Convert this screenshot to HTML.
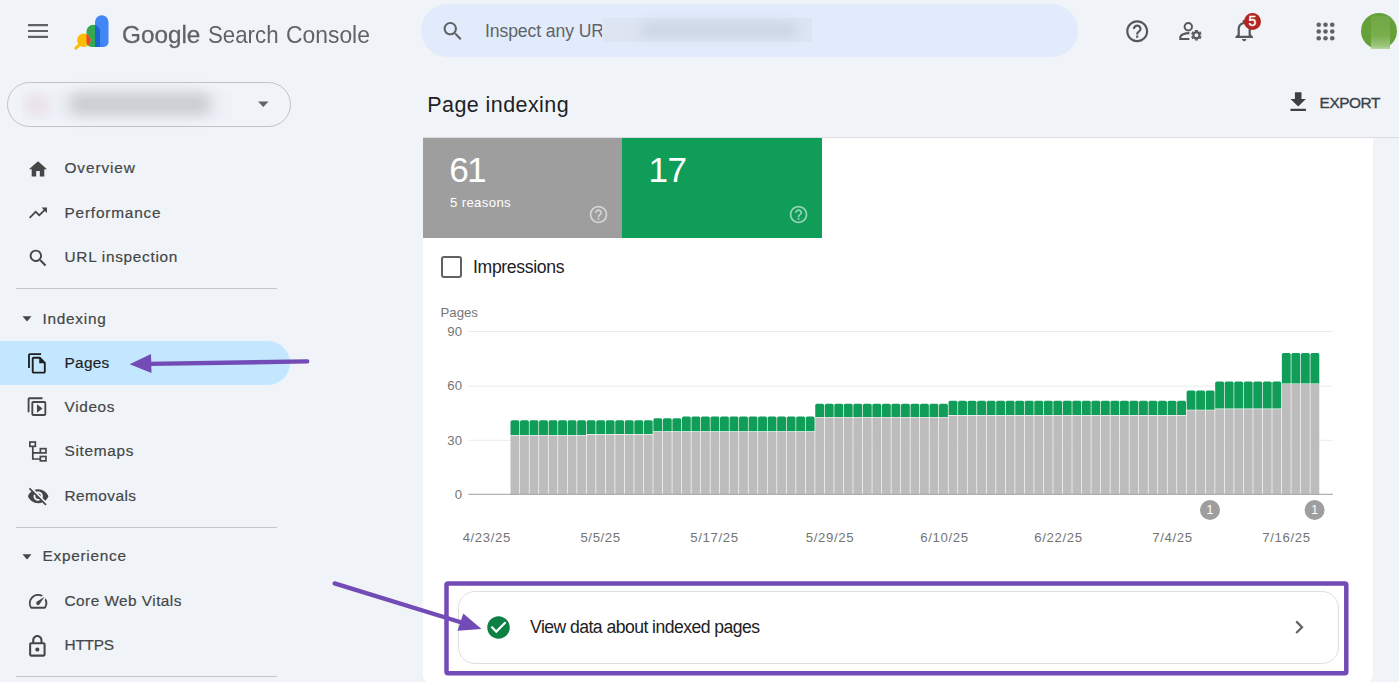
<!DOCTYPE html>
<html lang="en">
<head>
<meta charset="utf-8">
<title>Page indexing</title>
<style>
*{box-sizing:border-box;margin:0;padding:0}
html,body{width:1399px;height:682px;overflow:hidden}
body{background:#f0f4f9;font-family:"Liberation Sans",Arial,sans-serif;position:relative;color:#444746}
.abs{position:absolute}
.t{position:absolute;white-space:nowrap;line-height:1}
svg{position:absolute;overflow:visible}
.nav{font-size:15.4px;color:#444746;left:64.5px;-webkit-text-stroke:0.2px #444746;letter-spacing:.72px}
.sec{font-size:15.4px;color:#444746;left:42.5px;-webkit-text-stroke:0.2px #444746;letter-spacing:.72px}
.hr{position:absolute;left:15.5px;width:261px;height:1px;background:#c4c7c5}
.ic{fill:#444746}
</style>
</head>
<body>

<!-- ===== top-left: menu + logo + title ===== -->
<svg style="left:25.5px;top:18.800px;fill:#5f6368" width="24" height="24" viewBox="0 0 24 24"><path d="M2 19h20v-2.2H2V19zm0-5.9h20v-2.2H2v2.2zM2 5v2.2h20V5H2z"/></svg>

<svg style="left:72px;top:13px" width="40" height="40" viewBox="0 0 40 40">
  <defs>
    <clipPath id="cpB"><path d="M23 9.050a6.750 6.750 0 0 1 13.500 0V28.900a5 5 0 0 1 -5 5H23z"/></clipPath>
    <clipPath id="cpG"><path d="M14.500 18.450a6.750 6.750 0 0 1 13.500 0V33.900H19.500a5 5 0 0 1 -5 -5z"/></clipPath>
  </defs>
  <path d="M14.500 18.450a6.750 6.750 0 0 1 13.500 0V33.900H19.500a5 5 0 0 1 -5 -5z" fill="#34a853"/>
  <path d="M23 9.050a6.750 6.750 0 0 1 13.500 0V28.900a5 5 0 0 1 -5 5H23z" fill="#4285f4"/>
  <path d="M14.500 18.450a6.750 6.750 0 0 1 13.500 0V33.900H19.500a5 5 0 0 1 -5 -5z" fill="#1a67d2" clip-path="url(#cpB)"/>
  <path d="M8.300 31.200 L3.900 35.200" stroke="#fbbc04" stroke-width="3" stroke-linecap="round" fill="none"/>
  <circle cx="11.800" cy="27.300" r="6.700" fill="#fbbc04"/>
  <circle cx="11.800" cy="27.300" r="6.700" fill="#ea4335" clip-path="url(#cpG)"/>
</svg>

<div class="t" id="gsc" style="left:121.700px;top:22.700px;font-size:24.600px;color:#5f6368;width:260px"><span style="position:absolute;left:0;top:0;transform-origin:0 0;transform:scaleX(.988);-webkit-text-stroke:.3px #5f6368">Google</span> <span style="position:absolute;left:86.200px;top:0;transform-origin:0 0;transform:scaleX(.905)">Search</span> <span style="position:absolute;left:164px;top:0;transform-origin:0 0;transform:scaleX(.93)">Console</span></div>

<!-- property selector -->
<div class="abs" style="left:6.5px;top:82px;width:284px;height:45px;border:1px solid #c0c4c9;border-radius:23px"></div>
<div class="abs" style="left:22px;top:90px;width:210px;height:30px;border-radius:4px;background:#eef1f7"></div>
<div class="abs" style="left:24px;top:94px;width:26px;height:22px;border-radius:11px;background:#eadfea;filter:blur(5px);opacity:.8"></div>
<div class="abs" style="left:68px;top:93px;width:144px;height:22px;border-radius:11px;background:#c8cbd0;filter:blur(7px)"></div>
<svg style="left:250.5px;top:92px" width="24" height="24" viewBox="0 0 24 24"><path d="M7 9.5l5.3 5.6 5.3-5.6z" fill="#5f6368"/></svg>

<!-- ===== sidebar nav ===== -->
<svg class="ic" style="left:26px;top:156.5px" width="24" height="24" viewBox="0 0 24 24"><path d="M10 20v-6h4v6h5v-8h3L12 3 2 12h3v8z" transform="translate(1.2 1.5) scale(.9)"/></svg>
<div class="t nav" style="top:160px;letter-spacing:0.9px">Overview</div>

<svg class="ic" style="left:26px;top:200.5px" width="24" height="24" viewBox="0 0 24 24"><path d="M16 6l2.29 2.29-4.88 4.88-4-4L2 16.59 3.41 18l6-6 4 4 6.3-6.29L22 12V6z" transform="translate(1.2 1.2) scale(.9)"/></svg>
<div class="t nav" style="top:204.7px;letter-spacing:0.8px">Performance</div>

<svg class="ic" style="left:26.200px;top:245.500px" width="24" height="24" viewBox="0 0 24 24"><path d="M15.5 14h-.79l-.28-.27C15.41 12.59 16 11.11 16 9.500 16 5.910 13.090 3 9.500 3S3 5.910 3 9.500 5.910 16 9.500 16c1.610 0 3.090-.59 4.230-1.570l.27.28v.79l5 4.990L20.490 19l-4.990-5zm-6 0C7.010 14 5 11.990 5 9.500S7.010 5 9.500 5 14 7.010 14 9.500 11.990 14 9.500 14z" transform="translate(.8 .8) scale(.95)"/></svg>
<div class="t nav" style="top:249.2px;letter-spacing:0.7px">URL inspection</div>

<div class="hr" style="top:288px"></div>

<svg class="ic" style="left:14.5px;top:307px" width="24" height="24" viewBox="0 0 24 24"><path d="M7.500 9.200l4.500 5.300 4.500-5.300z"/></svg>
<div class="t sec" style="top:310.5px;letter-spacing:0.72px">Indexing</div>

<!-- selected item -->
<div class="abs" style="left:0;top:340.5px;width:290px;height:44.5px;background:#c2e7ff;border-radius:0 22.25px 22.25px 0"></div>
<svg style="left:25px;top:350.500px;fill:#1f1f1f" width="24" height="24" viewBox="0 0 24 24"><path d="M16 1H4c-1.100 0-2 .9-2 2v14h2V3h12V1zm-1 4H8c-1.100 0-1.990.9-1.990 2L6 21c0 1.100.89 2 1.990 2H19c1.100 0 2-.9 2-2V11l-6-6zM8 21V7h6v5h5v9H8z" transform="translate(1.2 1.200) scale(.93)"/></svg>
<div class="t nav" style="top:354.7px;color:#1f1f1f;-webkit-text-stroke:.2px #1f1f1f;letter-spacing:0.28px">Pages</div>

<svg class="ic" style="left:25.300px;top:395.200px" width="24" height="24" viewBox="0 0 24 24"><path d="M4 6H2v14c0 1.100.9 2 2 2h14v-2H4V6zm16-4H8c-1.100 0-2 .9-2 2v12c0 1.100.9 2 2 2h12c1.100 0 2-.9 2-2V4c0-1.100-.9-2-2-2zm0 14H8V4h12v12zM12 5.500v9l6-4.500z" transform="translate(.8 22.8) scale(.93 -.93)"/></svg>
<div class="t nav" style="top:399px;letter-spacing:0.64px">Videos</div>

<!-- sitemaps icon (custom) -->
<svg style="left:28px;top:440px" width="20" height="23" viewBox="0 0 20 23" fill="none" stroke="#444746" stroke-width="1.700">
  <rect x="1.850" y="2.050" width="5.500" height="4.300"/>
  <path d="M4.800 6.350V19h7.500M4.800 12.900h7.500"/>
  <rect x="12.350" y="8.650" width="5.600" height="4.250"/>
  <rect x="12.350" y="16.500" width="5.600" height="4.350"/>
</svg>
<div class="t nav" style="top:443.300px;letter-spacing:0.69px">Sitemaps</div>

<svg class="ic" style="left:26.600px;top:485px" width="22.400" height="22.400" viewBox="0 0 24 24"><path d="M12 7c2.760 0 5 2.240 5 5 0 .65-.13 1.260-.36 1.830l2.920 2.920c1.510-1.260 2.700-2.890 3.430-4.750-1.730-4.390-6-7.500-11-7.500-1.400 0-2.740.25-3.980.7l2.160 2.160C10.740 7.130 11.350 7 12 7zM2 4.270l2.280 2.280.46.46C3.080 8.300 1.780 10.020 1 12c1.730 4.390 6 7.500 11 7.500 1.550 0 3.030-.3 4.380-.84l.42.42L19.730 22 21 20.730 3.270 3 2 4.270zM7.530 9.800l1.550 1.550c-.05.21-.08.43-.08.65 0 1.660 1.340 3 3 3 .22 0 .44-.03.65-.08l1.550 1.550c-.67.33-1.410.53-2.200.53-2.760 0-5-2.240-5-5 0-.79.2-1.530.53-2.200zm4.310-.78l3.150 3.150.02-.16c0-1.660-1.340-3-3-3l-.17.010z"/></svg>
<div class="t nav" style="top:487.500px;letter-spacing:0.44px">Removals</div>

<div class="hr" style="top:526.5px"></div>

<svg class="ic" style="left:14.5px;top:545px" width="24" height="24" viewBox="0 0 24 24"><path d="M7.500 9.200l4.500 5.300 4.500-5.300z"/></svg>
<div class="t sec" style="top:548px;letter-spacing:0.72px">Experience</div>

<svg class="ic" style="left:25.5px;top:589.500px" width="24" height="24" viewBox="0 0 24 24"><path d="M20.380 8.570l-1.230 1.850a8 8 0 0 1-.22 7.580H5.070A8 8 0 0 1 15.580 6.850l1.850-1.230A10 10 0 0 0 3.350 19a2 2 0 0 0 1.720 1h13.850a2 2 0 0 0 1.740-1 10 10 0 0 0-.27-10.440zm-9.790 6.840a2 2 0 0 0 2.830 0l5.660-8.490-8.490 5.660a2 2 0 0 0 0 2.830z" transform="translate(1 .3) scale(.92)"/></svg>
<div class="t nav" style="top:592.700px;letter-spacing:0.45px">Core Web Vitals</div>

<svg class="ic" style="left:24.900px;top:633.500px" width="24" height="24" viewBox="0 0 24 24"><path d="M18 8h-1V6c0-2.760-2.240-5-5-5S7 3.240 7 6v2H6c-1.100 0-2 .9-2 2v10c0 1.100.9 2 2 2h12c1.100 0 2-.9 2-2V10c0-1.100-.9-2-2-2zM9 6c0-1.660 1.340-3 3-3s3 1.340 3 3v2H9V6zm9 14H6V10h12v10zm-6-3c1.100 0 2-.9 2-2s-.9-2-2-2-2 .9-2 2 .9 2 2 2z" transform="scale(1.030)"/></svg>
<div class="t nav" style="top:637px;letter-spacing:-0.22px">HTTPS</div>

<div class="hr" style="top:676px"></div>


<!-- ===== top search bar ===== -->
<div class="abs" style="left:421px;top:4px;width:656.500px;height:53px;border-radius:26.500px;background:#e2ebfb"></div>
<svg style="left:440.500px;top:19.300px;fill:#5f6368" width="24" height="24" viewBox="0 0 24 24"><path d="M15.500 14h-.79l-.28-.27C15.410 12.590 16 11.110 16 9.500 16 5.910 13.090 3 9.500 3S3 5.910 3 9.500 5.910 16 9.500 16c1.610 0 3.090-.59 4.230-1.570l.27.28v.79l5 4.990L20.490 19l-4.990-5zm-6 0C7.010 14 5 11.990 5 9.500S7.010 5 9.500 5 14 7.010 14 9.500 11.990 14 9.500 14z" transform="translate(-.4 0) scale(1.020)"/></svg>
<div class="t" id="insp" style="left:485px;top:22.700px;font-size:17.600px;color:#5f6368;letter-spacing:-.1px">Inspect any UR</div>
<div class="abs" style="left:602px;top:18px;width:210px;height:24px;background:#dde5f2"></div>
<div class="abs" style="left:640px;top:23px;width:158px;height:14px;border-radius:7px;background:#cbd4e3;filter:blur(6px)"></div>

<!-- header icons -->
<svg style="left:1124px;top:18px;fill:#54575b" width="26.400" height="26.400" viewBox="0 0 24 24"><path d="M11 18h2v-2h-2v2zm1-16C6.480 2 2 6.480 2 12s4.480 10 10 10 10-4.480 10-10S17.520 2 12 2zm0 18c-4.410 0-8-3.590-8-8s3.590-8 8-8 8 3.590 8 8-3.590 8-8 8zm0-14c-2.210 0-4 1.790-4 4h2c0-1.100.9-2 2-2s2 .9 2 2c0 2-3 1.750-3 5h2c0-2.250 3-2.500 3-5 0-2.210-1.790-4-4-4z"/></svg>

<!-- manage accounts (custom) -->
<svg style="left:1177px;top:19px" width="27" height="24" viewBox="0 0 27 24" fill="none" stroke="#54575b" stroke-width="2">
  <circle cx="11.300" cy="7.700" r="3.700"/>
  <path d="M12.400 14.100c-4.500 0 -9.100 1.500 -9.100 4.400V20h9" stroke-width="2.100"/>
  <circle cx="19.4" cy="16.3" r="3.100" stroke-width="2.200"/>
  <path d="M19.40 20.30L19.40 21.60M15.94 18.30L14.81 18.95M15.94 14.30L14.81 13.65M19.40 12.30L19.40 11.00M22.86 14.30L23.99 13.65M22.86 18.30L23.99 18.95" stroke-width="3"/>
</svg>

<svg style="left:1230.500px;top:17.400px;fill:#54575b" width="26.400" height="26.400" viewBox="0 0 24 24"><path d="M12 22c1.100 0 2-.9 2-2h-4c0 1.100.9 2 2 2zm6-6v-5c0-3.070-1.630-5.640-4.500-6.320V4c0-.83-.67-1.500-1.500-1.500s-1.500.67-1.500 1.500v.68C7.640 5.360 6 7.920 6 11v5l-2 2v1h16v-1l-2-2zm-2 1H8v-6c0-2.480 1.510-4.500 4-4.500s4 2.020 4 4.500v6z"/></svg>
<div class="abs" style="left:1243.500px;top:12.500px;width:17.600px;height:17.600px;border-radius:50%;background:#b3261e"></div>
<div class="t" style="left:1243.500px;top:14.100px;width:17.600px;text-align:center;font-size:14px;font-weight:400;-webkit-text-stroke:.4px #fff;color:#fff">5</div>

<svg style="left:1316px;top:21.500px;fill:#5f6368" width="19" height="19" viewBox="0 0 19 19">
  <circle cx="2.750" cy="2.750" r="2.300"/><circle cx="9.500" cy="2.750" r="2.300"/><circle cx="16.250" cy="2.750" r="2.300"/>
  <circle cx="2.750" cy="9.500" r="2.300"/><circle cx="9.500" cy="9.500" r="2.300"/><circle cx="16.250" cy="9.500" r="2.300"/>
  <circle cx="2.750" cy="16.250" r="2.300"/><circle cx="9.500" cy="16.250" r="2.300"/><circle cx="16.250" cy="16.250" r="2.300"/>
</svg>

<!-- avatar -->
<div class="abs" style="left:1360.700px;top:13px;width:36px;height:36px;border-radius:50%;background:#66a039"></div>
<div class="abs" style="left:1370.700px;top:16px;width:19.800px;height:33px;background:linear-gradient(#70a743,#7aae4e 60%,#9fc681 92%,#b9d6a4)"></div>

<!-- page title row -->
<div class="t" id="ttl" style="left:427.300px;top:95.200px;font-size:21.500px;color:#1f1f1f;letter-spacing:.42px">Page indexing</div>
<svg style="left:1284.500px;top:89.200px;fill:#3c4043" width="26.400" height="26.400" viewBox="0 0 24 24"><path d="M19 9h-4V3H9v6H5l7 7 7-7zM5 18v2h14v-2H5z"/></svg>
<div class="t" id="exp" style="left:1319.600px;top:95.300px;font-size:15.400px;color:#3c4043;letter-spacing:-.45px;-webkit-text-stroke:.35px #3c4043">EXPORT</div>

<div class="abs" style="left:423px;top:137px;width:976px;height:1px;background:#dadce0"></div>

<!-- ===== white card ===== -->
<div class="abs" style="left:423px;top:138px;width:950px;height:546px;background:#fff;border-radius:0 0 9px 9px"></div>

<!-- tiles -->
<div class="abs" style="left:423px;top:138px;width:199px;height:100px;background:#9e9e9e"></div>
<div class="abs" style="left:622px;top:138px;width:200px;height:100px;background:#0f9d58"></div>
<div class="t" style="left:449.300px;top:151.500px;font-size:35.200px;color:#fff;letter-spacing:-1.800px">61</div>
<div class="t" style="left:450px;top:196px;font-size:13.200px;color:#fff;letter-spacing:.35px">5 reasons</div>
<div class="t" style="left:648.500px;top:151.500px;font-size:35.200px;color:#fff;letter-spacing:-.6px">17</div>
<svg style="left:588.200px;top:204.200px;fill:#fff;opacity:.55" width="21.100" height="21.100" viewBox="0 0 24 24"><path d="M11 18h2v-2h-2v2zm1-16C6.480 2 2 6.480 2 12s4.480 10 10 10 10-4.480 10-10S17.520 2 12 2zm0 18c-4.410 0-8-3.590-8-8s3.590-8 8-8 8 3.590 8 8-3.590 8-8 8zm0-14c-2.210 0-4 1.790-4 4h2c0-1.100.9-2 2-2s2 .9 2 2c0 2-3 1.750-3 5h2c0-2.250 3-2.500 3-5 0-2.210-1.790-4-4-4z"/></svg>
<svg style="left:787.700px;top:204.200px;fill:#fff;opacity:.55" width="21.100" height="21.100" viewBox="0 0 24 24"><path d="M11 18h2v-2h-2v2zm1-16C6.480 2 2 6.480 2 12s4.480 10 10 10 10-4.480 10-10S17.520 2 12 2zm0 18c-4.410 0-8-3.590-8-8s3.590-8 8-8 8 3.590 8 8-3.590 8-8 8zm0-14c-2.210 0-4 1.790-4 4h2c0-1.100.9-2 2-2s2 .9 2 2c0 2-3 1.750-3 5h2c0-2.250 3-2.500 3-5 0-2.210-1.790-4-4-4z"/></svg>

<!-- checkbox -->
<div class="abs" style="left:440.500px;top:255.800px;width:21.800px;height:21.800px;border:2.200px solid #616161;border-radius:3px"></div>
<div class="t" id="impr" style="left:473px;top:259px;font-size:17.600px;color:#202124;letter-spacing:-.33px">Impressions</div>

<!-- ===== chart ===== -->
<svg style="left:0;top:0" width="1399" height="682" viewBox="0 0 1399 682" font-family="Liberation Sans, Arial, sans-serif">
  <g stroke="#ebebeb" stroke-width="1">
    <line x1="468.500" x2="1333" y1="331.500" y2="331.500"/>
    <line x1="468.500" x2="1333" y1="386.200" y2="386.200"/>
    <line x1="468.500" x2="1333" y1="440.300" y2="440.300"/>
  </g>
  <g shape-rendering="auto">
<rect x="510.50" y="435.58" width="8.87" height="58.67" fill="#bdbdbd"/>
<path d="M510.50 434.98V421.89q0 -1.6 1.6 -1.6h5.67q1.6 0 1.6 1.6V434.98z" fill="#0f9d58"/>
<rect x="520.02" y="435.58" width="8.87" height="58.67" fill="#bdbdbd"/>
<path d="M520.02 434.98V421.89q0 -1.6 1.6 -1.6h5.67q1.6 0 1.6 1.6V434.98z" fill="#0f9d58"/>
<rect x="529.55" y="435.58" width="8.87" height="58.67" fill="#bdbdbd"/>
<path d="M529.55 434.98V421.89q0 -1.6 1.6 -1.6h5.67q1.6 0 1.6 1.6V434.98z" fill="#0f9d58"/>
<rect x="539.07" y="435.58" width="8.87" height="58.67" fill="#bdbdbd"/>
<path d="M539.07 434.98V421.89q0 -1.6 1.6 -1.6h5.67q1.6 0 1.6 1.6V434.98z" fill="#0f9d58"/>
<rect x="548.59" y="435.58" width="8.87" height="58.67" fill="#bdbdbd"/>
<path d="M548.59 434.98V421.89q0 -1.6 1.6 -1.6h5.67q1.6 0 1.6 1.6V434.98z" fill="#0f9d58"/>
<rect x="558.12" y="435.58" width="8.87" height="58.67" fill="#bdbdbd"/>
<path d="M558.12 434.98V421.89q0 -1.6 1.6 -1.6h5.67q1.6 0 1.6 1.6V434.98z" fill="#0f9d58"/>
<rect x="567.64" y="435.58" width="8.87" height="58.67" fill="#bdbdbd"/>
<path d="M567.64 434.98V421.89q0 -1.6 1.6 -1.6h5.67q1.6 0 1.6 1.6V434.98z" fill="#0f9d58"/>
<rect x="577.16" y="435.58" width="8.87" height="58.67" fill="#bdbdbd"/>
<path d="M577.16 434.98V421.89q0 -1.6 1.6 -1.6h5.67q1.6 0 1.6 1.6V434.98z" fill="#0f9d58"/>
<rect x="586.68" y="434.67" width="8.87" height="59.58" fill="#bdbdbd"/>
<path d="M586.68 434.07V421.89q0 -1.6 1.6 -1.6h5.67q1.6 0 1.6 1.6V434.07z" fill="#0f9d58"/>
<rect x="596.21" y="434.67" width="8.87" height="59.58" fill="#bdbdbd"/>
<path d="M596.21 434.07V421.89q0 -1.6 1.6 -1.6h5.67q1.6 0 1.6 1.6V434.07z" fill="#0f9d58"/>
<rect x="605.73" y="434.67" width="8.87" height="59.58" fill="#bdbdbd"/>
<path d="M605.73 434.07V421.89q0 -1.6 1.6 -1.6h5.67q1.6 0 1.6 1.6V434.07z" fill="#0f9d58"/>
<rect x="615.25" y="434.67" width="8.87" height="59.58" fill="#bdbdbd"/>
<path d="M615.25 434.07V421.89q0 -1.6 1.6 -1.6h5.67q1.6 0 1.6 1.6V434.07z" fill="#0f9d58"/>
<rect x="624.78" y="434.67" width="8.87" height="59.58" fill="#bdbdbd"/>
<path d="M624.78 434.07V421.89q0 -1.6 1.6 -1.6h5.67q1.6 0 1.6 1.6V434.07z" fill="#0f9d58"/>
<rect x="634.30" y="434.67" width="8.87" height="59.58" fill="#bdbdbd"/>
<path d="M634.30 434.07V421.89q0 -1.6 1.6 -1.6h5.67q1.6 0 1.6 1.6V434.07z" fill="#0f9d58"/>
<rect x="643.82" y="434.67" width="8.87" height="59.58" fill="#bdbdbd"/>
<path d="M643.82 434.07V421.89q0 -1.6 1.6 -1.6h5.67q1.6 0 1.6 1.6V434.07z" fill="#0f9d58"/>
<rect x="653.35" y="431.96" width="8.87" height="62.29" fill="#bdbdbd"/>
<path d="M653.35 431.36V419.90q0 -1.6 1.6 -1.6h5.67q1.6 0 1.6 1.6V431.36z" fill="#0f9d58"/>
<rect x="662.87" y="431.96" width="8.87" height="62.29" fill="#bdbdbd"/>
<path d="M662.87 431.36V419.90q0 -1.6 1.6 -1.6h5.67q1.6 0 1.6 1.6V431.36z" fill="#0f9d58"/>
<rect x="672.39" y="431.96" width="8.87" height="62.29" fill="#bdbdbd"/>
<path d="M672.39 431.36V419.90q0 -1.6 1.6 -1.6h5.67q1.6 0 1.6 1.6V431.36z" fill="#0f9d58"/>
<rect x="681.91" y="431.96" width="8.87" height="62.29" fill="#bdbdbd"/>
<path d="M681.91 431.36V418.09q0 -1.6 1.6 -1.6h5.67q1.6 0 1.6 1.6V431.36z" fill="#0f9d58"/>
<rect x="691.44" y="431.96" width="8.87" height="62.29" fill="#bdbdbd"/>
<path d="M691.44 431.36V418.09q0 -1.6 1.6 -1.6h5.67q1.6 0 1.6 1.6V431.36z" fill="#0f9d58"/>
<rect x="700.96" y="431.96" width="8.87" height="62.29" fill="#bdbdbd"/>
<path d="M700.96 431.36V418.09q0 -1.6 1.6 -1.6h5.67q1.6 0 1.6 1.6V431.36z" fill="#0f9d58"/>
<rect x="710.48" y="431.96" width="8.87" height="62.29" fill="#bdbdbd"/>
<path d="M710.48 431.36V418.09q0 -1.6 1.6 -1.6h5.67q1.6 0 1.6 1.6V431.36z" fill="#0f9d58"/>
<rect x="720.01" y="431.96" width="8.87" height="62.29" fill="#bdbdbd"/>
<path d="M720.01 431.36V418.09q0 -1.6 1.6 -1.6h5.67q1.6 0 1.6 1.6V431.36z" fill="#0f9d58"/>
<rect x="729.53" y="431.96" width="8.87" height="62.29" fill="#bdbdbd"/>
<path d="M729.53 431.36V418.09q0 -1.6 1.6 -1.6h5.67q1.6 0 1.6 1.6V431.36z" fill="#0f9d58"/>
<rect x="739.05" y="431.96" width="8.87" height="62.29" fill="#bdbdbd"/>
<path d="M739.05 431.36V418.09q0 -1.6 1.6 -1.6h5.67q1.6 0 1.6 1.6V431.36z" fill="#0f9d58"/>
<rect x="748.58" y="431.96" width="8.87" height="62.29" fill="#bdbdbd"/>
<path d="M748.58 431.36V418.09q0 -1.6 1.6 -1.6h5.67q1.6 0 1.6 1.6V431.36z" fill="#0f9d58"/>
<rect x="758.10" y="431.96" width="8.87" height="62.29" fill="#bdbdbd"/>
<path d="M758.10 431.36V418.09q0 -1.6 1.6 -1.6h5.67q1.6 0 1.6 1.6V431.36z" fill="#0f9d58"/>
<rect x="767.62" y="431.96" width="8.87" height="62.29" fill="#bdbdbd"/>
<path d="M767.62 431.36V418.09q0 -1.6 1.6 -1.6h5.67q1.6 0 1.6 1.6V431.36z" fill="#0f9d58"/>
<rect x="777.14" y="431.96" width="8.87" height="62.29" fill="#bdbdbd"/>
<path d="M777.14 431.36V418.09q0 -1.6 1.6 -1.6h5.67q1.6 0 1.6 1.6V431.36z" fill="#0f9d58"/>
<rect x="786.67" y="431.96" width="8.87" height="62.29" fill="#bdbdbd"/>
<path d="M786.67 431.36V418.09q0 -1.6 1.6 -1.6h5.67q1.6 0 1.6 1.6V431.36z" fill="#0f9d58"/>
<rect x="796.19" y="431.96" width="8.87" height="62.29" fill="#bdbdbd"/>
<path d="M796.19 431.36V418.09q0 -1.6 1.6 -1.6h5.67q1.6 0 1.6 1.6V431.36z" fill="#0f9d58"/>
<rect x="805.71" y="431.96" width="8.87" height="62.29" fill="#bdbdbd"/>
<path d="M805.71 431.36V418.09q0 -1.6 1.6 -1.6h5.67q1.6 0 1.6 1.6V431.36z" fill="#0f9d58"/>
<rect x="815.24" y="417.49" width="8.87" height="76.76" fill="#bdbdbd"/>
<path d="M815.24 416.89V405.44q0 -1.6 1.6 -1.6h5.67q1.6 0 1.6 1.6V416.89z" fill="#0f9d58"/>
<rect x="824.76" y="417.49" width="8.87" height="76.76" fill="#bdbdbd"/>
<path d="M824.76 416.89V405.44q0 -1.6 1.6 -1.6h5.67q1.6 0 1.6 1.6V416.89z" fill="#0f9d58"/>
<rect x="834.28" y="417.49" width="8.87" height="76.76" fill="#bdbdbd"/>
<path d="M834.28 416.89V405.44q0 -1.6 1.6 -1.6h5.67q1.6 0 1.6 1.6V416.89z" fill="#0f9d58"/>
<rect x="843.81" y="417.49" width="8.87" height="76.76" fill="#bdbdbd"/>
<path d="M843.81 416.89V405.44q0 -1.6 1.6 -1.6h5.67q1.6 0 1.6 1.6V416.89z" fill="#0f9d58"/>
<rect x="853.33" y="417.49" width="8.87" height="76.76" fill="#bdbdbd"/>
<path d="M853.33 416.89V405.44q0 -1.6 1.6 -1.6h5.67q1.6 0 1.6 1.6V416.89z" fill="#0f9d58"/>
<rect x="862.85" y="417.49" width="8.87" height="76.76" fill="#bdbdbd"/>
<path d="M862.85 416.89V405.44q0 -1.6 1.6 -1.6h5.67q1.6 0 1.6 1.6V416.89z" fill="#0f9d58"/>
<rect x="872.37" y="417.49" width="8.87" height="76.76" fill="#bdbdbd"/>
<path d="M872.37 416.89V405.44q0 -1.6 1.6 -1.6h5.67q1.6 0 1.6 1.6V416.89z" fill="#0f9d58"/>
<rect x="881.90" y="417.49" width="8.87" height="76.76" fill="#bdbdbd"/>
<path d="M881.90 416.89V405.44q0 -1.6 1.6 -1.6h5.67q1.6 0 1.6 1.6V416.89z" fill="#0f9d58"/>
<rect x="891.42" y="417.49" width="8.87" height="76.76" fill="#bdbdbd"/>
<path d="M891.42 416.89V405.44q0 -1.6 1.6 -1.6h5.67q1.6 0 1.6 1.6V416.89z" fill="#0f9d58"/>
<rect x="900.94" y="417.49" width="8.87" height="76.76" fill="#bdbdbd"/>
<path d="M900.94 416.89V405.44q0 -1.6 1.6 -1.6h5.67q1.6 0 1.6 1.6V416.89z" fill="#0f9d58"/>
<rect x="910.47" y="417.49" width="8.87" height="76.76" fill="#bdbdbd"/>
<path d="M910.47 416.89V405.44q0 -1.6 1.6 -1.6h5.67q1.6 0 1.6 1.6V416.89z" fill="#0f9d58"/>
<rect x="919.99" y="417.49" width="8.87" height="76.76" fill="#bdbdbd"/>
<path d="M919.99 416.89V405.44q0 -1.6 1.6 -1.6h5.67q1.6 0 1.6 1.6V416.89z" fill="#0f9d58"/>
<rect x="929.51" y="417.49" width="8.87" height="76.76" fill="#bdbdbd"/>
<path d="M929.51 416.89V405.44q0 -1.6 1.6 -1.6h5.67q1.6 0 1.6 1.6V416.89z" fill="#0f9d58"/>
<rect x="939.03" y="417.49" width="8.87" height="76.76" fill="#bdbdbd"/>
<path d="M939.03 416.89V405.44q0 -1.6 1.6 -1.6h5.67q1.6 0 1.6 1.6V416.89z" fill="#0f9d58"/>
<rect x="948.56" y="415.68" width="8.87" height="78.57" fill="#bdbdbd"/>
<path d="M948.56 415.08V402.27q0 -1.6 1.6 -1.6h5.67q1.6 0 1.6 1.6V415.08z" fill="#0f9d58"/>
<rect x="958.08" y="415.68" width="8.87" height="78.57" fill="#bdbdbd"/>
<path d="M958.08 415.08V402.27q0 -1.6 1.6 -1.6h5.67q1.6 0 1.6 1.6V415.08z" fill="#0f9d58"/>
<rect x="967.60" y="415.68" width="8.87" height="78.57" fill="#bdbdbd"/>
<path d="M967.60 415.08V402.27q0 -1.6 1.6 -1.6h5.67q1.6 0 1.6 1.6V415.08z" fill="#0f9d58"/>
<rect x="977.13" y="415.68" width="8.87" height="78.57" fill="#bdbdbd"/>
<path d="M977.13 415.08V402.27q0 -1.6 1.6 -1.6h5.67q1.6 0 1.6 1.6V415.08z" fill="#0f9d58"/>
<rect x="986.65" y="415.68" width="8.87" height="78.57" fill="#bdbdbd"/>
<path d="M986.65 415.08V402.27q0 -1.6 1.6 -1.6h5.67q1.6 0 1.6 1.6V415.08z" fill="#0f9d58"/>
<rect x="996.17" y="415.68" width="8.87" height="78.57" fill="#bdbdbd"/>
<path d="M996.17 415.08V402.27q0 -1.6 1.6 -1.6h5.67q1.6 0 1.6 1.6V415.08z" fill="#0f9d58"/>
<rect x="1005.70" y="415.68" width="8.87" height="78.57" fill="#bdbdbd"/>
<path d="M1005.70 415.08V402.27q0 -1.6 1.6 -1.6h5.67q1.6 0 1.6 1.6V415.08z" fill="#0f9d58"/>
<rect x="1015.22" y="415.68" width="8.87" height="78.57" fill="#bdbdbd"/>
<path d="M1015.22 415.08V402.27q0 -1.6 1.6 -1.6h5.67q1.6 0 1.6 1.6V415.08z" fill="#0f9d58"/>
<rect x="1024.74" y="415.68" width="8.87" height="78.57" fill="#bdbdbd"/>
<path d="M1024.74 415.08V402.27q0 -1.6 1.6 -1.6h5.67q1.6 0 1.6 1.6V415.08z" fill="#0f9d58"/>
<rect x="1034.26" y="415.68" width="8.87" height="78.57" fill="#bdbdbd"/>
<path d="M1034.26 415.08V402.27q0 -1.6 1.6 -1.6h5.67q1.6 0 1.6 1.6V415.08z" fill="#0f9d58"/>
<rect x="1043.79" y="415.68" width="8.87" height="78.57" fill="#bdbdbd"/>
<path d="M1043.79 415.08V402.27q0 -1.6 1.6 -1.6h5.67q1.6 0 1.6 1.6V415.08z" fill="#0f9d58"/>
<rect x="1053.31" y="415.68" width="8.87" height="78.57" fill="#bdbdbd"/>
<path d="M1053.31 415.08V402.27q0 -1.6 1.6 -1.6h5.67q1.6 0 1.6 1.6V415.08z" fill="#0f9d58"/>
<rect x="1062.83" y="415.68" width="8.87" height="78.57" fill="#bdbdbd"/>
<path d="M1062.83 415.08V402.27q0 -1.6 1.6 -1.6h5.67q1.6 0 1.6 1.6V415.08z" fill="#0f9d58"/>
<rect x="1072.36" y="415.68" width="8.87" height="78.57" fill="#bdbdbd"/>
<path d="M1072.36 415.08V402.27q0 -1.6 1.6 -1.6h5.67q1.6 0 1.6 1.6V415.08z" fill="#0f9d58"/>
<rect x="1081.88" y="415.68" width="8.87" height="78.57" fill="#bdbdbd"/>
<path d="M1081.88 415.08V402.27q0 -1.6 1.6 -1.6h5.67q1.6 0 1.6 1.6V415.08z" fill="#0f9d58"/>
<rect x="1091.40" y="415.68" width="8.87" height="78.57" fill="#bdbdbd"/>
<path d="M1091.40 415.08V402.27q0 -1.6 1.6 -1.6h5.67q1.6 0 1.6 1.6V415.08z" fill="#0f9d58"/>
<rect x="1100.93" y="415.68" width="8.87" height="78.57" fill="#bdbdbd"/>
<path d="M1100.93 415.08V402.27q0 -1.6 1.6 -1.6h5.67q1.6 0 1.6 1.6V415.08z" fill="#0f9d58"/>
<rect x="1110.45" y="415.68" width="8.87" height="78.57" fill="#bdbdbd"/>
<path d="M1110.45 415.08V402.27q0 -1.6 1.6 -1.6h5.67q1.6 0 1.6 1.6V415.08z" fill="#0f9d58"/>
<rect x="1119.97" y="415.68" width="8.87" height="78.57" fill="#bdbdbd"/>
<path d="M1119.97 415.08V402.27q0 -1.6 1.6 -1.6h5.67q1.6 0 1.6 1.6V415.08z" fill="#0f9d58"/>
<rect x="1129.49" y="415.68" width="8.87" height="78.57" fill="#bdbdbd"/>
<path d="M1129.49 415.08V402.27q0 -1.6 1.6 -1.6h5.67q1.6 0 1.6 1.6V415.08z" fill="#0f9d58"/>
<rect x="1139.02" y="415.68" width="8.87" height="78.57" fill="#bdbdbd"/>
<path d="M1139.02 415.08V402.27q0 -1.6 1.6 -1.6h5.67q1.6 0 1.6 1.6V415.08z" fill="#0f9d58"/>
<rect x="1148.54" y="415.68" width="8.87" height="78.57" fill="#bdbdbd"/>
<path d="M1148.54 415.08V402.27q0 -1.6 1.6 -1.6h5.67q1.6 0 1.6 1.6V415.08z" fill="#0f9d58"/>
<rect x="1158.06" y="415.68" width="8.87" height="78.57" fill="#bdbdbd"/>
<path d="M1158.06 415.08V402.27q0 -1.6 1.6 -1.6h5.67q1.6 0 1.6 1.6V415.08z" fill="#0f9d58"/>
<rect x="1167.59" y="415.68" width="8.87" height="78.57" fill="#bdbdbd"/>
<path d="M1167.59 415.08V402.27q0 -1.6 1.6 -1.6h5.67q1.6 0 1.6 1.6V415.08z" fill="#0f9d58"/>
<rect x="1177.11" y="415.68" width="8.87" height="78.57" fill="#bdbdbd"/>
<path d="M1177.11 415.08V402.27q0 -1.6 1.6 -1.6h5.67q1.6 0 1.6 1.6V415.08z" fill="#0f9d58"/>
<rect x="1186.63" y="410.26" width="8.87" height="83.99" fill="#bdbdbd"/>
<path d="M1186.63 409.66V392.05q0 -1.6 1.6 -1.6h5.67q1.6 0 1.6 1.6V409.66z" fill="#0f9d58"/>
<rect x="1196.16" y="410.26" width="8.87" height="83.99" fill="#bdbdbd"/>
<path d="M1196.16 409.66V392.05q0 -1.6 1.6 -1.6h5.67q1.6 0 1.6 1.6V409.66z" fill="#0f9d58"/>
<rect x="1205.68" y="410.26" width="8.87" height="83.99" fill="#bdbdbd"/>
<path d="M1205.68 409.66V392.05q0 -1.6 1.6 -1.6h5.67q1.6 0 1.6 1.6V409.66z" fill="#0f9d58"/>
<rect x="1215.20" y="409.17" width="8.87" height="85.08" fill="#bdbdbd"/>
<path d="M1215.20 408.57V383.19q0 -1.6 1.6 -1.6h5.67q1.6 0 1.6 1.6V408.57z" fill="#0f9d58"/>
<rect x="1224.72" y="409.17" width="8.87" height="85.08" fill="#bdbdbd"/>
<path d="M1224.72 408.57V383.19q0 -1.6 1.6 -1.6h5.67q1.6 0 1.6 1.6V408.57z" fill="#0f9d58"/>
<rect x="1234.25" y="409.17" width="8.87" height="85.08" fill="#bdbdbd"/>
<path d="M1234.25 408.57V383.19q0 -1.6 1.6 -1.6h5.67q1.6 0 1.6 1.6V408.57z" fill="#0f9d58"/>
<rect x="1243.77" y="409.17" width="8.87" height="85.08" fill="#bdbdbd"/>
<path d="M1243.77 408.57V383.19q0 -1.6 1.6 -1.6h5.67q1.6 0 1.6 1.6V408.57z" fill="#0f9d58"/>
<rect x="1253.29" y="409.17" width="8.87" height="85.08" fill="#bdbdbd"/>
<path d="M1253.29 408.57V383.19q0 -1.6 1.6 -1.6h5.67q1.6 0 1.6 1.6V408.57z" fill="#0f9d58"/>
<rect x="1262.82" y="409.17" width="8.87" height="85.08" fill="#bdbdbd"/>
<path d="M1262.82 408.57V383.19q0 -1.6 1.6 -1.6h5.67q1.6 0 1.6 1.6V408.57z" fill="#0f9d58"/>
<rect x="1272.34" y="409.17" width="8.87" height="85.08" fill="#bdbdbd"/>
<path d="M1272.34 408.57V383.19q0 -1.6 1.6 -1.6h5.67q1.6 0 1.6 1.6V408.57z" fill="#0f9d58"/>
<rect x="1281.86" y="384.04" width="8.87" height="110.21" fill="#bdbdbd"/>
<path d="M1281.86 383.44V354.53q0 -1.6 1.6 -1.6h5.67q1.6 0 1.6 1.6V383.44z" fill="#0f9d58"/>
<rect x="1291.39" y="384.04" width="8.87" height="110.21" fill="#bdbdbd"/>
<path d="M1291.39 383.44V354.53q0 -1.6 1.6 -1.6h5.67q1.6 0 1.6 1.6V383.44z" fill="#0f9d58"/>
<rect x="1300.91" y="384.04" width="8.87" height="110.21" fill="#bdbdbd"/>
<path d="M1300.91 383.44V354.53q0 -1.6 1.6 -1.6h5.67q1.6 0 1.6 1.6V383.44z" fill="#0f9d58"/>
<rect x="1310.43" y="384.04" width="8.87" height="110.21" fill="#bdbdbd"/>
<path d="M1310.43 383.44V354.53q0 -1.6 1.6 -1.6h5.67q1.6 0 1.6 1.6V383.44z" fill="#0f9d58"/>
  </g>
  <line x1="468.500" x2="1333" y1="494.300" y2="494.300" stroke="#9e9e9e" stroke-width="1"/>
  <g font-size="13.200" fill="#757575">
    <text x="440.500" y="317">Pages</text>
    <g text-anchor="end">
      <text x="462" y="336.300">90</text>
      <text x="462" y="390.300">60</text>
      <text x="462" y="444.800">30</text>
      <text x="462" y="499">0</text>
    </g>
    <g text-anchor="middle" letter-spacing=".62">
      <text x="486.800" y="541.800">4/23/25</text>
      <text x="600.600" y="541.800">5/5/25</text>
      <text x="714.500" y="541.800">5/17/25</text>
      <text x="830" y="541.800">5/29/25</text>
      <text x="944.500" y="541.800">6/10/25</text>
      <text x="1058.500" y="541.800">6/22/25</text>
      <text x="1172.500" y="541.800">7/4/25</text>
      <text x="1286.500" y="541.800">7/16/25</text>
    </g>
  </g>
  <circle cx="1210" cy="510" r="10" fill="#9e9e9e"/>
  <circle cx="1314.600" cy="510" r="10" fill="#9e9e9e"/>
  <g font-size="12.200" fill="#fff" text-anchor="middle">
    <text x="1210" y="514.300">1</text>
    <text x="1314.600" y="514.300">1</text>
  </g>
</svg>

<!-- ===== bottom row card ===== -->
<div class="abs" style="left:458px;top:590.800px;width:881px;height:73.300px;border:1px solid #dcdfe3;border-radius:17px;background:#fff"></div>
<svg style="left:485.200px;top:613.500px;fill:#0d8043" width="27" height="27" viewBox="0 0 24 24"><path d="M12 2C6.480 2 2 6.480 2 12s4.480 10 10 10 10-4.480 10-10S17.520 2 12 2zm-2 15l-5-5 1.410-1.410L10 14.170l7.590-7.590L19 8l-9 9z"/></svg>
<div class="t" id="vd" style="left:530px;top:618.600px;font-size:17.600px;color:#202124;letter-spacing:-.54px">View data about indexed pages</div>
<svg style="left:1285.500px;top:614px;fill:#5f6368" width="26.400" height="26.400" viewBox="0 0 24 24"><path d="M10 6L8.590 7.410 13.170 12l-4.580 4.590L10 18l6-6z"/></svg>

<!-- ===== purple annotations ===== -->
<svg style="left:0;top:0" width="1399" height="682" viewBox="0 0 1399 682">
  <rect x="446.500" y="583.500" width="899.800" height="89.800" rx="1.500" fill="none" stroke="#734bb7" stroke-width="4.500"/>
  <!-- arrow 1 -->
  <path d="M307.200 361.400 L149 363.900" stroke="#734bb7" stroke-width="4.400" stroke-linecap="round" fill="none"/>
  <path d="M129.700 364.300 L151 354 L151.500 372.900z" fill="#734bb7"/>
  <!-- arrow 2 -->
  <path d="M334.600 583.400 L464 623.300" stroke="#734bb7" stroke-width="4.300" stroke-linecap="round" fill="none"/>
  <path d="M481.500 629 L463.300 613.600 L457.500 630.800z" fill="#734bb7"/>
</svg>


</body>
</html>
